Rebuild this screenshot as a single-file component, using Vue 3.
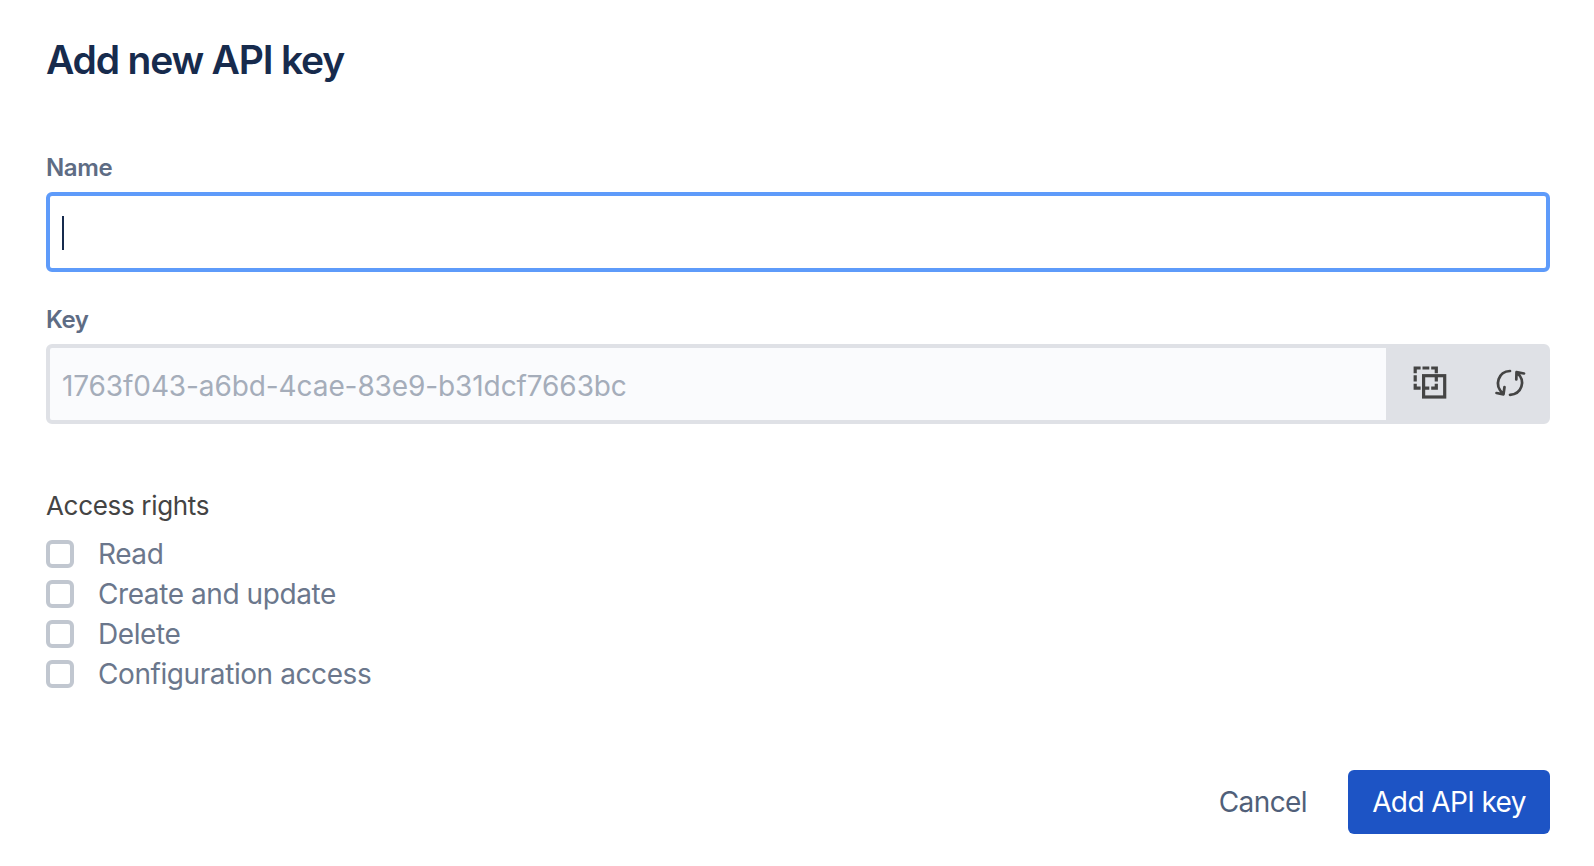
<template>
    <form class="dialog" @submit.prevent>
        <h1>Add new API key</h1>

        <label class="label" for="name">Name</label>
        <div class="field" @click="nameInput.focus()">
            <span v-if="!name" class="caret"></span>
            <input id="name" ref="nameInput" v-model="name" type="text" autocomplete="off" />
        </div>

        <span class="label key-label">Key</span>
        <div class="field key-field">
            <div class="key-value">{{ apiKey }}</div>
            <div class="key-actions">
                <button type="button" class="icon" aria-label="Copy" @click="copyKey">
                    <svg viewBox="0 0 50 50" width="50" height="50">
                        <path d="M10.2 15.2V10H15.6M17.5 10H24.3M26.2 10H31.3V15.2M31.3 17.2V23.6M31.3 25.8V30.2H26.2M24.3 30.2H17.5M15.6 30.2H10.2V25.8M10.2 23.6V17.2" />
                        <rect x="18.6" y="17.7" width="21.1" height="21.3" />
                    </svg>
                </button>
                <button type="button" class="icon" aria-label="Generate" @click="generateKey">
                    <svg class="refresh" viewBox="0 0 50 50" width="50" height="50">
                        <path d="M25 13C13.5 13.5 8.5 27 18 35.5M11.5 35L18.5 36.3L19.5 29" />
                        <path d="M25 36.8C36.5 36.3 41.5 23 32 14.7M39 15.5L31.5 14.2L31.3 21.5" />
                    </svg>
                </button>
            </div>
        </div>

        <fieldset class="rights">
            <legend>Access rights</legend>
            <label v-for="right in rights" :key="right.label" class="right">
                <input v-model="right.checked" type="checkbox" />
                <span>{{ right.label }}</span>
            </label>
        </fieldset>

        <div class="buttons">
            <button type="button" class="cancel">Cancel</button>
            <button type="submit" class="submit">Add API key</button>
        </div>
    </form>
</template>

<script setup>
import { ref } from 'vue';

const nameInput = ref(null);
const name = ref('');
const apiKey = ref('1763f043-a6bd-4cae-83e9-b31dcf7663bc');
const rights = ref([
    { label: 'Read', checked: false },
    { label: 'Create and update', checked: false },
    { label: 'Delete', checked: false },
    { label: 'Configuration access', checked: false }
]);

const copyKey = () => {
    navigator.clipboard?.writeText(apiKey.value);
};

const generateKey = () => {
    apiKey.value = crypto.randomUUID();
};
</script>

<style>
body {
    background: #fff;
}
</style>

<style scoped>
.dialog {
    box-sizing: border-box;
    width: 1594px;
    height: 866px;
    padding: 36px 44px 32px 46px;
    display: flex;
    flex-direction: column;
    font-family: Inter, sans-serif;
}

h1 {
    margin: 0 0 68px;
    font-size: 39px;
    line-height: 48px;
    font-weight: 600;
    letter-spacing: -1.2px;
    color: #172b4d;
}

.label {
    height: 40px;
    line-height: 32px;
    font-size: 24px;
    font-weight: 600;
    letter-spacing: -0.4px;
    color: #5e6c84;
}

.key-label {
    margin-top: 32px;
}

.field {
    box-sizing: border-box;
    height: 80px;
    display: flex;
    align-items: center;
    border: 4px solid #5e9bfa;
    border-radius: 6px;
    padding-left: 12px;
}

.field input {
    flex: 1;
    border: none;
    outline: none;
    padding: 0;
    font: inherit;
    font-size: 28px;
    background: none;
    color: #172b4d;
}

.caret {
    width: 2px;
    height: 34px;
    margin-top: 2px;
    background: #172b4d;
}

.key-field {
    border-color: #dfe1e6;
    background: #fafbfd;
    color: #a5adba;
    font-size: 28px;
}

.key-value {
    flex: 1;
    padding-top: 4px;
    letter-spacing: -0.1px;
}

.key-actions {
    display: flex;
    gap: 30px;
    padding: 10px 11px 12px 19px;
    background: #dfe1e6;
}

button {
    border: none;
    padding: 0;
    background: none;
    font: inherit;
    font-size: 28px;
    letter-spacing: -0.6px;
    cursor: pointer;
}

.icon {
    display: flex;
}

.icon path,
.icon rect {
    fill: none;
    stroke: #444;
    stroke-width: 3.2;
}

.icon .refresh path {
    stroke-width: 2.7;
    stroke-linecap: round;
    stroke-linejoin: round;
}

.rights {
    margin: 66px 0 0;
    padding: 0;
    border: none;
    color: #6b778c;
    font-size: 28px;
    letter-spacing: -0.42px;
}

legend {
    padding: 0;
    height: 44px;
    line-height: 32px;
    font-size: 26px;
    letter-spacing: -0.32px;
    color: #444;
}

.right {
    display: flex;
    align-items: center;
    gap: 24px;
    height: 40px;
}

.right input {
    appearance: none;
    margin: 0;
    width: 28px;
    height: 28px;
    border: 4px solid #c1c7d0;
    border-radius: 6px;
}

.buttons {
    margin-top: auto;
    display: flex;
    justify-content: flex-end;
    gap: 41px;
}

.cancel {
    color: #505f79;
}

.submit {
    width: 202px;
    height: 64px;
    border-radius: 6px;
    background: #1d54c5;
    color: #fff;
}
</style>
